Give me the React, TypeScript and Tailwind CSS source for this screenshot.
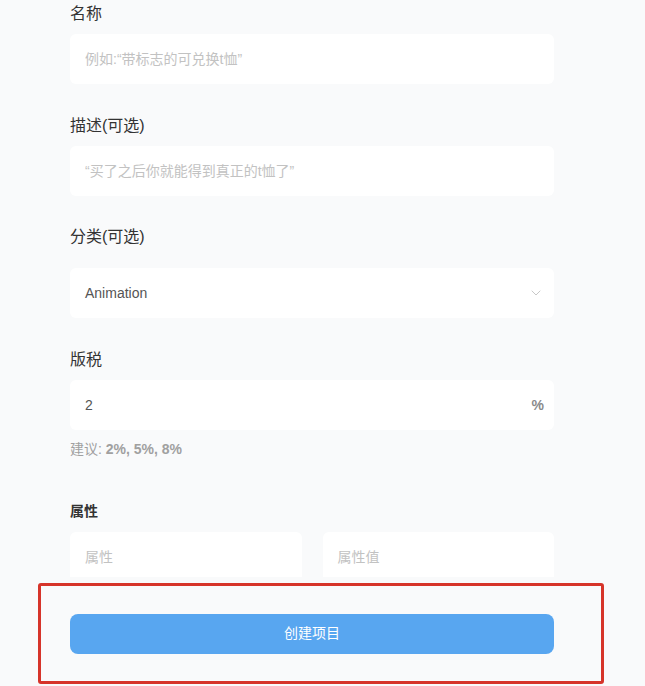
import { ChevronDown } from "lucide-react";

const font = { fontFamily: '"Liberation Sans", "Noto Sans CJK SC", sans-serif' };

const Label = ({ text }: { text: string }) => (
  <div className="text-[16px] leading-6 text-[#333333]">{text}</div>
);

const TextField = ({ placeholder }: { placeholder: string }) => (
  <input
    placeholder={placeholder}
    className="mt-2 h-[50px] w-full rounded-md bg-white px-[15px] text-[14px] text-[#555] outline-none placeholder:text-[#c2c2c2]"
  />
);

export default function App() {
  return (
    <div style={font} className="relative h-[686px] w-[645px] overflow-hidden bg-[#f9fafb]">
      <div className="flex w-[484px] flex-col pl-[70px] pt-[2px] box-content">
        <div>
          <Label text="名称" />
          <TextField placeholder="例如:“带标志的可兑换t恤”" />
        </div>

        <div className="mt-[30px]">
          <Label text="描述(可选)" />
          <TextField placeholder="“买了之后你就能得到真正的t恤了”" />
        </div>

        <div className="mt-[29px]">
          <Label text="分类(可选)" />
          <div className="mt-[19px] flex h-[50px] items-center justify-between rounded-md bg-white pl-[15px] pr-[10px]">
            <span className="text-[14px] text-[#555]">Animation</span>
            <ChevronDown className="h-4 w-4 text-[#c8c8c8]" strokeWidth={1.5} />
          </div>
        </div>

        <div className="mt-[30px]">
          <Label text="版税" />
          <div className="mt-2 flex h-[50px] items-center justify-between rounded-md bg-white pl-[15px] pr-[10px]">
            <span className="text-[14px] text-[#555]">2</span>
            <span className="text-[14px] font-bold text-[#8a8a8a]">%</span>
          </div>
          <div className="mt-[9px] text-[14px] leading-5 text-[#a0a0a0]">
            建议: <span className="font-semibold">2%, 5%, 8%</span>
          </div>
        </div>

        <div className="mt-[42px]">
          <div className="text-[14px] font-bold leading-5 text-[#333]">属性</div>
          <div className="mt-[11px] flex h-[45px] gap-[21px] overflow-hidden">
            <div className="flex h-[50px] flex-1 items-center rounded-md bg-white px-[15px] text-[14px] text-[#c2c2c2]">
              属性
            </div>
            <div className="flex h-[50px] flex-1 items-center rounded-md bg-white px-[15px] text-[14px] text-[#c2c2c2]">
              属性值
            </div>
          </div>
        </div>
      </div>

      <div className="ml-[38px] mt-[6px] flex h-[101px] w-[566px] items-center rounded-[3px] border-[3px] border-[#d6342a] pl-[29px]">
        <button className="h-10 w-[484px] rounded-lg bg-[#58a6f0] text-[14px] text-white">
          创建项目
        </button>
      </div>
    </div>
  );
}
